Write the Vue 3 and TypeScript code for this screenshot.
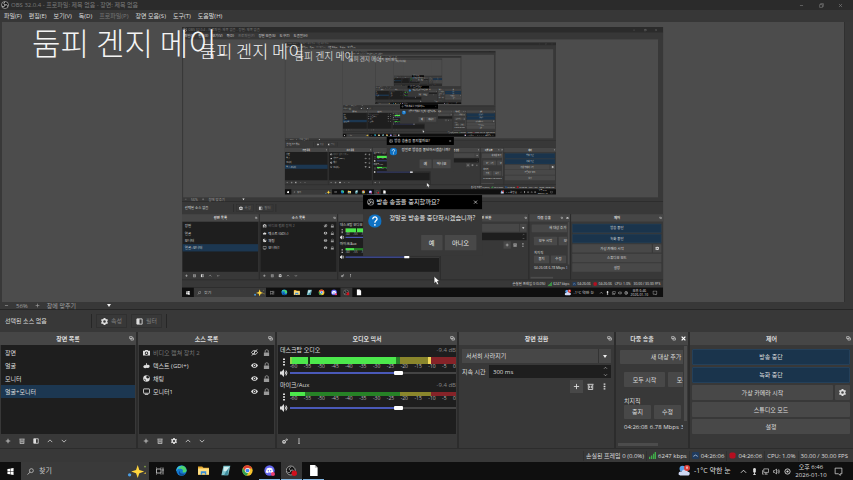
<script setup lang="ts">
import { getCurrentInstance, h, ref } from 'vue'
import type { Component } from 'vue'

const props = withDefaults(defineProps<{ depth?: number }>(), { depth: 0 })

// The preview shows the captured desktop, so the component renders itself.
const Desktop = getCurrentInstance()!.type as Component
const maxDepth = 5

const line = 'fill="none" stroke="currentColor" stroke-width="2"'
const icons: Record<string, string> = {
  plus: `<path d="M8 2v12M2 8h12" ${line}/>`,
  minus: `<path d="M3 8h10" ${line}/>`,
  trash: `<path d="M1 3h14M3 4v11h10V4M6 6v6M10 6v6" ${line}/>`,
  filter: `<path d="M2 2h12v12H2z" ${line}/><path d="M2 2h6v12H2z" fill="currentColor"/>`,
  up: `<path d="M2 11l6-6 6 6" ${line}/>`,
  down: `<path d="M2 5l6 6 6-6" ${line}/>`,
  gear: `<path fill="currentColor" fill-rule="evenodd" d="M6 0h4l.5 2.2 1.6.9 2.2-.8 1.6 3-1.6 1.6v2.2l1.6 1.6-1.6 3-2.2-.8-1.6.9L10 16H6l-.5-2.2-1.6-.9-2.2.8-1.6-3 1.6-1.6V6.900L.1 5.300l1.600-3 2.200.8 1.600-.9zM8 5a3 3 0 100 6 3 3 0 000-6z"/>`,
  gears: `<circle cx="5.500" cy="10" r="3.500" fill="none" stroke="currentColor" stroke-width="3"/><circle cx="12.500" cy="4.500" r="2" ${line}/>`,
  dots: `<path fill="currentColor" d="M6 1h4v3H6zM6 6.500h4v3H6zM6 12h4v3H6z"/>`,
  float: `<path d="M2 2h8v6H2zM6 8v5h8V6h-4" ${line}/>`,
  close: `<path d="M3 3l10 10M13 3L3 13" ${line}/>`,
  closebold: `<path d="M2 2l12 12M14 2L2 14" fill="none" stroke="currentColor" stroke-width="4"/>`,
  restore: `<path d="M2 5h9v9H2zM5 5V2h9v9h-3" ${line}/>`,
  camera: `<path fill="currentColor" fill-rule="evenodd" d="M0 4h4l1.500-2h5L12 4h4v11H0zM8 5.500a4 4 0 100 8 4 4 0 000-8z"/><circle cx="8" cy="9.500" r="2" fill="currentColor"/>`,
  text: `<path fill="currentColor" d="M1 9l4-3 2 2V3h2v4c4-2 7 0 6 4-1 3-4 3-6 2l-4 1c-3 0-5-2-4-5z"/>`,
  globe: `<circle cx="8" cy="8" r="7.500" fill="currentColor"/><path fill="#1e1e1e" d="M9 1l-2 4 3 3 4-1-1-4zM2 8l4 2v4z"/>`,
  screen: `<rect x="1" y="2" width="14" height="10" rx="1" ${line}/><path d="M4 15h8" ${line}/>`,
  eye: `<path fill="currentColor" d="M0 8c4-7 12-7 16 0-4 7-12 7-16 0z"/><circle cx="8" cy="8" r="3.600" fill="#1e1e1e"/><circle cx="8" cy="8" r="1.800" fill="currentColor"/>`,
  eyeoff: `<path d="M1 8c4-6 10-6 14 0-4 6-10 6-14 0zM14 1L2 15M8 5v6" ${line}/>`,
  lock: `<path fill="currentColor" d="M2 8h12v8H2z"/><path d="M5 8V4c0-3 7-3 7 0v4" ${line}/>`,
  speaker: `<path fill="currentColor" d="M0 5h3l5-5v16l-5-5H0z"/><path d="M10 5q2 3 0 6M12 3q4 5 0 10" ${line}/>`,
  obs: `<circle cx="8" cy="8" r="7" fill="#111" stroke="#d8d8d8" stroke-width="1.200"/><path d="M8 8c-3-1-3-4 0-6M8 8c3-2 5 0 5 3M8 8c0 3-3 5-6 2" fill="none" stroke="#d8d8d8" stroke-width="1.600"/>`,
  obsrec: `<circle cx="7" cy="8" r="6.500" fill="#151515" stroke="#b5b5b5" stroke-width="1.200"/><path d="M7 8c-3-1-3-3 0-5M7 8c3-2 4 0 4 2M7 8c0 3-3 4-5 2" fill="none" stroke="#b5b5b5" stroke-width="1.200"/><circle cx="12" cy="12" r="4" fill="#d3101c"/>`,
  signal: `<path fill="#3fae48" d="M0 11h3v5H0zM4.500 8h3v8h-3zM9 4h3v12H9zM13 0h3v16h-3z"/>`,
  live: `<rect width="16" height="16" rx="3" fill="#203b5e"/><path d="M3 10q5-6 10 0" fill="none" stroke="#a6bdd8" stroke-width="2"/>`,
  rec: `<rect x="1" y="1" width="14" height="14" rx="4" fill="#b50f20"/>`,
  windows: `<path fill="#fff" d="M1 2.500l6-1v6H1zM8 1.400L15 0v7.500H8zM1 8.500h6v6l-6-1zM8 8.500h7V16l-7-1.300z"/>`,
  search: `<circle cx="10" cy="6" r="4.500" fill="none" stroke="currentColor" stroke-width="1.500"/><path d="M7 9.500L1 15" stroke="currentColor" stroke-width="1.500"/>`,
  task: `<path d="M1 4h9v8H1zM1 1v2M10 1v2M1 13v2M10 13v2M14 1v14M12.500 6h3" fill="none" stroke="currentColor" stroke-width="1.500"/>`,
  edge: `<circle cx="8" cy="8" r="7.500" fill="#1479cf"/><path fill="#4bd46f" d="M2 4c4-5 13-4 13.500 4 0 3-4 3.500-6 2 2-3-2-6-5-4z"/><path fill="#38bdea" d="M.5 9C0 4 4 1 8 1.500 6 3 3 5 .5 9z"/><path fill="#0c4b93" d="M5 8c0 4 4 6 9 4-3 5-10 4-10-1z"/>`,
  folder: `<path fill="#e8a92d" d="M0 2h6l2 2h8v10H0z"/><path fill="#ffdf82" d="M0 5h16v9H0z"/><path fill="#3c8ed5" d="M4 9h8v5h-2v-2H6v2H4z"/>`,
  note: `<path fill="#7ec4cc" d="M5 1h10l-3 14H2z"/><path fill="#d3eff0" d="M6 3h7l-1 6H5z"/><path fill="#3e8b9d" d="M9 9l4-5-2 11H6z"/>`,
  chrome: `<circle cx="8" cy="8" r="7.500" fill="#f5c32c"/><path fill="#dd4033" d="M1.500 4A7.500 7.500 0 0114.800 5H8L5 9.500z"/><path fill="#32a350" d="M1.300 4.500L5 10.500l4 .5-2 4.500A7.500 7.500 0 011.300 4.500z"/><circle cx="8" cy="8" r="3.600" fill="#fff"/><circle cx="8" cy="8" r="2.700" fill="#4285f4"/>`,
  discord: `<circle cx="8" cy="8" r="7.500" fill="#6467ee"/><path fill="#fff" d="M4 5q4-2 8 0l1.500 5.500L11 12l-1-1H6l-1 1-2.500-1.500z"/><circle cx="6.300" cy="8.300" r="1" fill="#6467ee"/><circle cx="9.700" cy="8.300" r="1" fill="#6467ee"/><circle cx="13" cy="13" r="3" fill="#ed4070"/>`,
  doc: `<path fill="#fff" d="M3 0h7l4 4v12H3z"/><path fill="#bbb" d="M10 0v4h4z"/>`,
  sparkles: `<path fill="#ffd53d" d="M15 0l2 6 6 2-6 2-2 6-2-6-6-2 6-2zM27 5l1 4 4 1-4 1-1 4-1-4-4-1 4-1z"/><circle cx="5" cy="12" r="2" fill="#4b9de2"/><circle cx="24" cy="2" r="1" fill="#8ab04d"/><circle cx="34" cy="14" r="1" fill="#ddd"/>`,
  weather: `<circle cx="6" cy="5" r="4" fill="#5a9fe6"/><path fill="#cfd9f5" d="M1 13c-1-4 2-5 4-4 1-4 7-4 8 0 4 0 3 5 0 5H3z"/><circle cx="12" cy="4" r="4" fill="#da3c38"/><path d="M12 2v3" stroke="#fff" stroke-width="1.500"/>`,
  mic: `<rect x="5" y="0" width="6" height="11" rx="3" fill="currentColor"/><path d="M8 10v6M5 15h6" ${line}/>`,
  net: `<path d="M4 2h11v8H4zM9 10v4M6 14h7M1 5v9h3" fill="none" stroke="currentColor" stroke-width="1.500"/>`,
  vol: `<path d="M1 6h3l4-4v12l-4-4H1zM11 5q2 3 0 6M13 3q3 5 0 10" fill="none" stroke="currentColor" stroke-width="1.500"/>`,
  circle: `<circle cx="8" cy="8" r="6" ${line}/><circle cx="8" cy="8" r="2.500" fill="currentColor"/>`,
  notice: `<path d="M2 2h12v10h-3v3l-3-3H2z" fill="none" stroke="currentColor" stroke-width="1.300"/>`,
  help: `<circle cx="8" cy="8" r="8" fill="#0f72c4"/><path d="M5.500 6c0-4 5.500-3.500 5 0-.3 1.500-2.500 1.500-2.500 4M8 11.500v2" fill="none" stroke="#fff" stroke-width="1.600"/>`,
  cursor: `<path fill="#fff" stroke="#222" d="M3 0v13l3-3 2 5 3-1-2-5h4z"/>`,
}

const Icon = (p: { name: string; wide?: boolean }) =>
  h('svg', {
    class: 'icon',
    viewBox: p.wide ? '0 0 36 16' : '0 0 16 16',
    'aria-hidden': 'true',
    innerHTML: icons[p.name],
  })
Icon.props = ['name', 'wide']

const menus = ['파일(F)', '편집(E)', '보기(V)', '독(D)', '프로파일(P)', '장면 모음(S)', '도구(T)', '도움말(H)']
const scenes = ['장면', '얼굴', '모니터', '얼굴+모니터']
const scene = ref('얼굴+모니터')
const sources = [
  { icon: 'camera', name: '비디오 캡쳐 장치 2', on: false },
  { icon: 'text', name: '텍스트 (GDI+)', on: true },
  { icon: 'globe', name: '채팅', on: true },
  { icon: 'screen', name: '모니터1', on: true },
]
const channels = ref([
  { name: '데스크탑 오디오', db: '-9.4 dB', kind: 'system', level: 66 },
  { name: '마이크/Aux', db: '-9.4 dB', kind: 'voice', level: 66 },
])
const ticks = [-60, -55, -50, -45, -40, -35, -30, -25, -20, -15, -10, -5, 0]
const apps = [
  { icon: 'task', label: '작업 보기', state: '' },
  { icon: 'edge', label: 'Edge', state: '' },
  { icon: 'folder', label: '탐색기', state: '' },
  { icon: 'note', label: '메모장', state: '' },
  { icon: 'chrome', label: 'Chrome', state: '' },
  { icon: 'discord', label: 'Discord', state: 'open' },
  { icon: 'obsrec', label: 'OBS', state: 'open active' },
  { icon: 'doc', label: '문서', state: 'open' },
]
</script>

<template>
  <div class="desktop">
    <header class="titlebar">
      <Icon name="obs" />
      <span class="title">OBS 32.0.4 - 프로파일: 제목 없음 - 장면: 제목 없음</span>
      <button aria-label="최소화"><Icon name="minus" /></button>
      <button aria-label="복원"><Icon name="restore" /></button>
      <button aria-label="닫기"><Icon name="close" /></button>
    </header>
    <nav class="menubar">
      <button v-for="(m, i) in menus" :key="m" :disabled="i === 4">{{ m }}</button>
    </nav>

    <main class="preview">
      <div class="canvas">
        <div v-if="props.depth < maxDepth" class="capture" inert aria-hidden="true">
          <component :is="Desktop" :depth="props.depth + 1" />
        </div>
      </div>
      <p class="caption">둠피 겐지 메이</p>
    </main>

    <div class="zoombar">
      <button aria-label="축소"><Icon name="minus" /></button>
      <span>56%</span>
      <button aria-label="확대"><Icon name="plus" /></button>
      <button class="fit">창에 맞추기 <i class="caret"></i></button>
    </div>
    <div class="context">
      <span class="selected-source">선택된 소스 없음</span>
      <div class="context-tools">
        <button><Icon name="gear" />속성</button>
        <button><Icon name="filter" />필터</button>
      </div>
    </div>

    <div class="docks">
      <section class="dock">
        <h2>장면 목록<Icon name="float" /></h2>
        <ul class="list">
          <li v-for="s in scenes" :key="s">
            <button class="scene" :class="{ current: s === scene }" @click="scene = s">{{ s }}</button>
          </li>
        </ul>
        <div class="tools">
          <button aria-label="추가"><Icon name="plus" /></button>
          <button aria-label="삭제"><Icon name="trash" /></button>
          <button aria-label="필터"><Icon name="filter" /></button>
          <button aria-label="위로"><Icon name="up" /></button>
          <button aria-label="아래로"><Icon name="down" /></button>
        </div>
      </section>

      <section class="dock">
        <h2>소스 목록<Icon name="float" /></h2>
        <ul class="list">
          <li v-for="s in sources" :key="s.name" class="source" :class="{ off: !s.on }">
            <Icon :name="s.icon" class="kind" />
            <span>{{ s.name }}</span>
            <button aria-label="표시"><Icon :name="s.on ? 'eye' : 'eyeoff'" /></button>
            <button class="lock" aria-label="잠금"><Icon name="lock" /></button>
          </li>
        </ul>
        <div class="tools">
          <button aria-label="추가"><Icon name="plus" /></button>
          <button aria-label="삭제"><Icon name="trash" /></button>
          <button aria-label="설정"><Icon name="gear" /></button>
          <button aria-label="위로"><Icon name="up" /></button>
          <button aria-label="아래로"><Icon name="down" /></button>
        </div>
      </section>

      <section class="dock">
        <h2>오디오 믹서<Icon name="float" /></h2>
        <div class="mixer">
          <div v-for="c in channels" :key="c.name" class="channel">
            <div class="channel-name"><span>{{ c.name }}</span><span class="db">{{ c.db }}</span></div>
            <div class="channel-body">
              <button class="more" aria-label="채널 메뉴"><Icon name="dots" /></button>
              <div class="meter-box">
                <div class="meter" :class="c.kind"></div>
                <div class="scale"><span v-for="t in ticks" :key="t">{{ t }}</span></div>
              </div>
              <button aria-label="음소거"><Icon name="speaker" /></button>
              <input v-model.number="c.level" type="range" min="0" max="100" :aria-label="c.name" :style="{ '--level': c.level + '%' }" />
            </div>
          </div>
        </div>
        <div class="tools">
          <button aria-label="고급 오디오"><Icon name="gears" /></button>
          <button aria-label="메뉴"><Icon name="dots" /></button>
        </div>
      </section>

      <section class="dock">
        <h2>장면 전환<Icon name="float" /></h2>
        <div class="transition">
          <div class="select">
            <select aria-label="장면 전환"><option>서서히 사라지기</option></select>
            <i class="caret"></i>
          </div>
          <label class="duration">
            <span>지속 시간</span>
            <span class="spin"><input type="text" value="300 ms" /><span class="arrows"><Icon name="up" /><Icon name="down" /></span></span>
          </label>
          <div class="transition-tools">
            <button class="add" aria-label="추가"><Icon name="plus" /></button>
            <button aria-label="삭제"><Icon name="trash" /></button>
            <button aria-label="메뉴"><Icon name="dots" /></button>
          </div>
        </div>
      </section>

      <section class="dock multi">
        <h2>다중 송출<Icon name="float" /><Icon name="closebold" class="bright" /></h2>
        <div class="multi-view">
          <div class="multi-body">
            <button class="btn new">새 대상 추가</button>
            <div class="row"><button class="btn all">모두 시작</button><button class="btn all">모두 중지</button></div>
            <p>치지직</p>
            <div class="row target"><button class="btn">중지</button><button class="btn">수정</button></div>
            <p class="stats"><span>04:26:08</span><span>6.78 Mbps</span><span>34</span></p>
          </div>
          <i class="vbar"></i>
          <i class="hbar"></i>
        </div>
      </section>

      <section class="dock">
        <h2>제어<Icon name="float" /></h2>
        <div class="controls">
          <button class="btn live">방송 중단</button>
          <button class="btn live">녹화 중단</button>
          <div class="vcam">
            <button class="btn">가상 카메라 시작</button>
            <button class="btn" aria-label="가상 카메라 설정"><Icon name="gear" /></button>
          </div>
          <button class="btn low">스튜디오 모드</button>
          <button class="btn low">설정</button>
        </div>
      </section>
    </div>

    <footer class="status">
      <span>손실된 프레임 0 (0.0%)</span>
      <span><Icon name="signal" />6247 kbps</span>
      <span><Icon name="live" />04:26:06</span>
      <span><Icon name="rec" />04:26:06</span>
      <span>CPU: 1.0%</span>
      <span>30.00 / 30.00 FPS</span>
    </footer>

    <footer class="taskbar">
      <button class="start" aria-label="시작"><Icon name="windows" /></button>
      <label class="search">
        <Icon name="search" />
        <input type="text" placeholder="찾기" aria-label="찾기" />
        <Icon name="sparkles" wide class="sparkles" />
      </label>
      <div class="apps">
        <button v-for="a in apps" :key="a.icon" :class="a.state" :aria-label="a.label"><Icon :name="a.icon" /></button>
      </div>
      <div class="tray">
        <Icon name="weather" class="weather" />
        <span class="temp">-1°C 약한 눈</span>
        <Icon name="up" /><Icon name="mic" /><Icon name="net" /><Icon name="vol" /><Icon name="circle" />
        <time><span>오후 6:46</span><span>2026-01-10</span></time>
        <Icon name="notice" class="notice" />
      </div>
    </footer>

    <template v-if="props.depth > 0">
      <div class="dialog" role="dialog" aria-label="방송 송출을 중지할까요?">
        <div class="dialog-title"><Icon name="obs" /><span>방송 송출을 중지할까요?</span><button aria-label="닫기"><Icon name="close" /></button></div>
        <div class="dialog-body"><Icon name="help" /><p>정말로 방송을 중단하시겠습니까?</p></div>
        <div class="dialog-actions"><button class="btn">예</button><button class="btn">아니오</button></div>
      </div>
      <Icon name="cursor" class="cursor" />
    </template>
  </div>
</template>

<style>
body {
  margin: 0;
  overflow: hidden;
}
</style>

<style scoped>
.desktop {
  position: relative;
  display: flex;
  flex-direction: column;
  box-sizing: border-box;
  width: 100vw;
  height: 100vh;
  overflow: hidden;
  background: #383838;
  color: #dedede;
  font: 6px/8px "Open Sans", "Noto Sans CJK KR", sans-serif;
}
.desktop * {
  box-sizing: border-box;
}
button, input, select {
  margin: 0;
  padding: 0;
  border: 0;
  border-radius: 0;
  background: none;
  color: inherit;
  font: inherit;
  white-space: nowrap;
}
button {
  display: flex;
  align-items: center;
  justify-content: center;
}
p, h2, ul {
  margin: 0;
  padding: 0;
  list-style: none;
}
.icon {
  display: block;
  flex: none;
  width: 7px;
  height: 7px;
}
.caret {
  border: 2px solid transparent;
  border-top: 3px solid #eee;
  border-bottom: 0;
}
.titlebar {
  display: flex;
  align-items: center;
  flex: none;
  gap: 2px;
  height: 10px;
  padding: 0 5px 0 1px;
  background: #2b2b2b;
  color: #7c7c7c;
}
.titlebar .title {
  flex: 1;
}
.titlebar button {
  width: 18px;
}
.titlebar button:last-child {
  width: 16px;
}
.titlebar button .icon {
  width: 5px;
  height: 5px;
}
.titlebar > .icon {
  width: 8px;
  height: 8px;
}
.menubar {
  display: flex;
  align-items: center;
  flex: none;
  gap: 7px;
  height: 12px;
  padding: 0 4px;
  background: #373737;
}
.menubar button:disabled {
  color: #777;
}
.preview {
  position: relative;
  display: flex;
  align-items: center;
  justify-content: center;
  flex: 1;
  min-height: 0;
  margin: 0 8px 0 2px;
  border-right: 1px solid #303030;
  background: #4c4c4c;
}
.canvas {
  width: 56.4vw;
  height: 56.4vh;
  background: #4c4c4c;
  overflow: hidden;
}
.capture {
  width: 100vw;
  height: 100vh;
  transform: scale(0.564);
  transform-origin: 0 0;
}
.caption {
  position: absolute;
  left: 30px;
  top: 0;
  color: #f4f4f4;
  font: 200 31px/40px "Noto Sans CJK KR", sans-serif;
  white-space: nowrap;
}
.zoombar {
  display: flex;
  align-items: center;
  flex: none;
  gap: 7px;
  height: 8px;
  padding-left: 4px;
  border-bottom: 1px solid #262626;
  color: #a0a0a0;
}
.zoombar .icon {
  width: 5px;
  height: 5px;
}
.zoombar .fit {
  justify-content: space-between;
  width: 64px;
}
.context {
  display: flex;
  align-items: center;
  flex: none;
  height: 22px;
  padding-left: 5px;
}
.selected-source {
  width: 86px;
}
.context-tools {
  display: flex;
  gap: 4px;
  padding: 0 4px;
  border: solid #262626;
  border-width: 0 1px;
}
.context-tools button {
  gap: 3px;
  width: 31px;
  height: 14px;
  border: 1px solid #303030;
  color: #818181;
}
.context-tools .icon {
  color: #dedede;
}
.docks {
  display: grid;
  grid-template-columns: 136fr 137fr 180fr 155fr 72fr 163fr;
  gap: 2px;
  flex: none;
  height: 116px;
  background: #2c2c2c;
}
.dock {
  display: flex;
  flex-direction: column;
  min-width: 0;
  background: #383838;
}
h2 {
  display: flex;
  align-items: center;
  justify-content: center;
  position: relative;
  height: 13px;
  background: #464646;
  font: inherit;
  font-weight: 600;
}
h2 .icon {
  position: absolute;
  right: 2px;
  width: 5px;
  height: 5px;
}
.multi h2 {
  padding-right: 20px;
}
.multi h2 .icon {
  right: 12px;
}
.multi h2 .bright {
  right: 2px;
  color: #fff;
}
.list {
  flex: 1;
  margin: 0 1px;
  padding-top: 1px;
  background: #1e1e1e;
}
.scene {
  justify-content: flex-start;
  width: 100%;
  height: 13px;
  padding-left: 4px;
}
.current {
  background: #1c3751;
}
.source {
  display: flex;
  align-items: center;
  gap: 4px;
  height: 13px;
  padding: 0 4px;
}
.source span {
  flex: 1;
}
.source .kind {
  margin-right: -1px;
}
.source.off span {
  color: #777;
}
.lock {
  padding-left: 1px;
  color: #9a9a9a;
}
.tools {
  display: flex;
  align-items: center;
  gap: 7px;
  height: 14px;
  padding-left: 4px;
}
.tools .icon {
  width: 6px;
  height: 6px;
}
.tools button {
  width: 7px;
}
.mixer {
  display: flex;
  flex-direction: column;
  gap: 4px;
  flex: 1;
  margin: 0 1px;
  padding: 1px 0 0 2px;
  overflow: hidden;
  background: #1e1e1e;
}
.channel-name {
  display: flex;
  justify-content: space-between;
}
.db {
  color: #858585;
}
.channel-body {
  display: grid;
  grid-template-columns: 8px 1fr;
  grid-template-rows: 15px 8px;
  column-gap: 2px;
}
.channel .icon {
  width: 8px;
  height: 8px;
}
.meter-box {
  padding-top: 3px;
}
.meter.system {
  height: 7px;
  background: linear-gradient(90deg, #8ad84c 1%, #4ce84c 1% 11%, #163b16 11% 12%, #4ce84c 12% 64%, #268226 64% 66%, #8a862c 66% 83%, #f1d85a 83% 85%, #852328 85%);
}
.meter.voice {
  height: 4px;
  background: linear-gradient(90deg, #4ce84c 9%, #268226 9% 66%, #8a862c 66% 85%, #852328 85%);
}
.scale {
  display: flex;
  justify-content: space-between;
  color: #b8b8b8;
  font-size: 5px;
  line-height: 5px;
}
input[type="range"] {
  appearance: none;
  align-self: center;
  width: 100%;
  height: 4px;
  background: linear-gradient(90deg, #4a59b8 var(--level), #444 var(--level)) center / 100% 2px no-repeat;
}
input[type="range"]::-webkit-slider-thumb {
  appearance: none;
  width: 9px;
  height: 4px;
  border-radius: 1px;
  background: #fff;
}
.transition {
  display: flex;
  flex-direction: column;
  gap: 2px;
  flex: 1;
  padding: 4px 3px;
}
.select {
  display: flex;
  align-items: center;
  height: 14px;
  padding-right: 4px;
  background: #474747;
}
.select select {
  appearance: none;
  flex: 1;
  height: 14px;
  padding-left: 4px;
  border-right: 1px solid #333;
}
.select .caret {
  margin-left: 4px;
}
.duration {
  display: flex;
  align-items: center;
  justify-content: space-between;
}
.spin {
  display: flex;
  align-items: center;
  width: 122px;
  height: 13px;
  padding: 0 3px 0 4px;
  background: #1e1e1e;
}
.spin input {
  flex: 1;
  min-width: 0;
}
.arrows {
  display: grid;
  gap: 3px;
}
.arrows .icon {
  width: 5px;
  height: 4px;
}
.transition-tools {
  display: flex;
  justify-content: flex-end;
  gap: 1px;
}
.transition-tools button {
  width: 13px;
  height: 13px;
}
.transition-tools .add {
  background: #484848;
}
.btn {
  background: #484848;
  border-radius: 1px;
}
.multi-view {
  position: relative;
  flex: 1;
  min-height: 0;
  overflow: hidden;
}
.multi-body {
  display: flex;
  flex-direction: column;
  width: 67px;
  height: 95px;
  padding: 5px 0 0 8px;
  overflow: hidden;
  white-space: nowrap;
}
.new {
  flex: none;
  width: 92px;
  height: 14px;
  margin: 0 0 8px -4px;
}
.row {
  display: flex;
  gap: 3px;
}
.all {
  flex: none;
  width: 41px;
  height: 15px;
  margin-bottom: 10px;
}
.target .btn {
  width: 27px;
  height: 14px;
}
.stats {
  display: flex;
  gap: 2px;
  padding-top: 4px;
}
.vbar, .hbar {
  position: absolute;
  background: #4c4c4c;
}
.vbar {
  top: 1px;
  right: 1px;
  width: 3px;
  height: 75px;
}
.hbar {
  left: 2px;
  bottom: 2px;
  width: 40px;
  height: 3px;
}
.controls {
  display: flex;
  flex-direction: column;
  gap: 2px;
  padding: 4px 3px 0 2px;
}
.controls .btn {
  height: 15px;
}
.controls .live {
  height: 16px;
  border: 1px solid #24405a;
  background: #1a344c;
}
.vcam {
  display: grid;
  grid-template-columns: 1fr 15px;
  gap: 2px;
}
.status {
  display: flex;
  align-items: center;
  justify-content: flex-end;
  flex: none;
  height: 14px;
  padding-right: 3px;
  border-top: 1px solid #2c2c2c;
}
.status span {
  display: flex;
  align-items: center;
  gap: 2px;
  height: 10px;
  padding: 0 2px;
  border-left: 1px solid #303030;
  white-space: nowrap;
}
.taskbar {
  display: flex;
  flex: none;
  height: 18px;
  background: #0f0f0f;
}
.start {
  width: 21px;
}
.search {
  display: flex;
  align-items: center;
  gap: 5px;
  width: 128px;
  padding: 0 3px 0 6px;
  background: #3a3a3a;
  font-size: 7px;
}
.search input {
  flex: 1;
  min-width: 0;
}
.search input::placeholder {
  color: #c4c4c4;
}
.sparkles {
  width: 28px;
  height: 13px;
}
.apps {
  display: flex;
  gap: 1px;
  flex: 1;
}
.apps button {
  width: 21px;
  border-bottom: 1px solid transparent;
}
.apps .icon {
  width: 11px;
  height: 11px;
}
.apps button:first-child .icon {
  width: 8px;
  height: 8px;
}
.apps .open {
  border-color: #83b7e2;
}
.apps .active {
  background: #363636;
}
.tray {
  display: flex;
  align-items: center;
  gap: 4px;
  padding-right: 10px;
}
.weather {
  width: 12px;
  height: 12px;
}
.temp {
  width: 42px;
  font-size: 7px;
  white-space: nowrap;
}
time {
  display: grid;
  width: 32px;
  text-align: center;
  white-space: nowrap;
}
.notice {
  width: 9px;
  height: 9px;
  margin-left: 3px;
}
.dialog {
  position: absolute;
  left: 37.6%;
  top: 62%;
  width: 211px;
  height: 108px;
  background: #383838;
  font-size: 11px;
  line-height: 14px;
  color: #eee;
}
.dialog-title {
  display: flex;
  align-items: center;
  gap: 4px;
  height: 25px;
  padding: 0 7px;
  background: #000;
}
.dialog-title span {
  flex: 1;
}
.dialog-title .icon {
  width: 13px;
  height: 13px;
}
.dialog-title button .icon {
  width: 9px;
  height: 9px;
}
.dialog-body {
  display: flex;
  gap: 14px;
  height: 46px;
  padding: 9px 9px 0;
  white-space: nowrap;
}
.dialog-body .icon {
  width: 24px;
  height: 24px;
}
.dialog-actions {
  display: flex;
  justify-content: flex-end;
  gap: 4px;
  padding-right: 10px;
}
.dialog-actions .btn {
  width: 38px;
  height: 27px;
}
.dialog-actions .btn:last-child {
  width: 56px;
}
.cursor {
  position: absolute;
  left: 52%;
  top: 92%;
  width: 16px;
  height: 16px;
}
</style>
